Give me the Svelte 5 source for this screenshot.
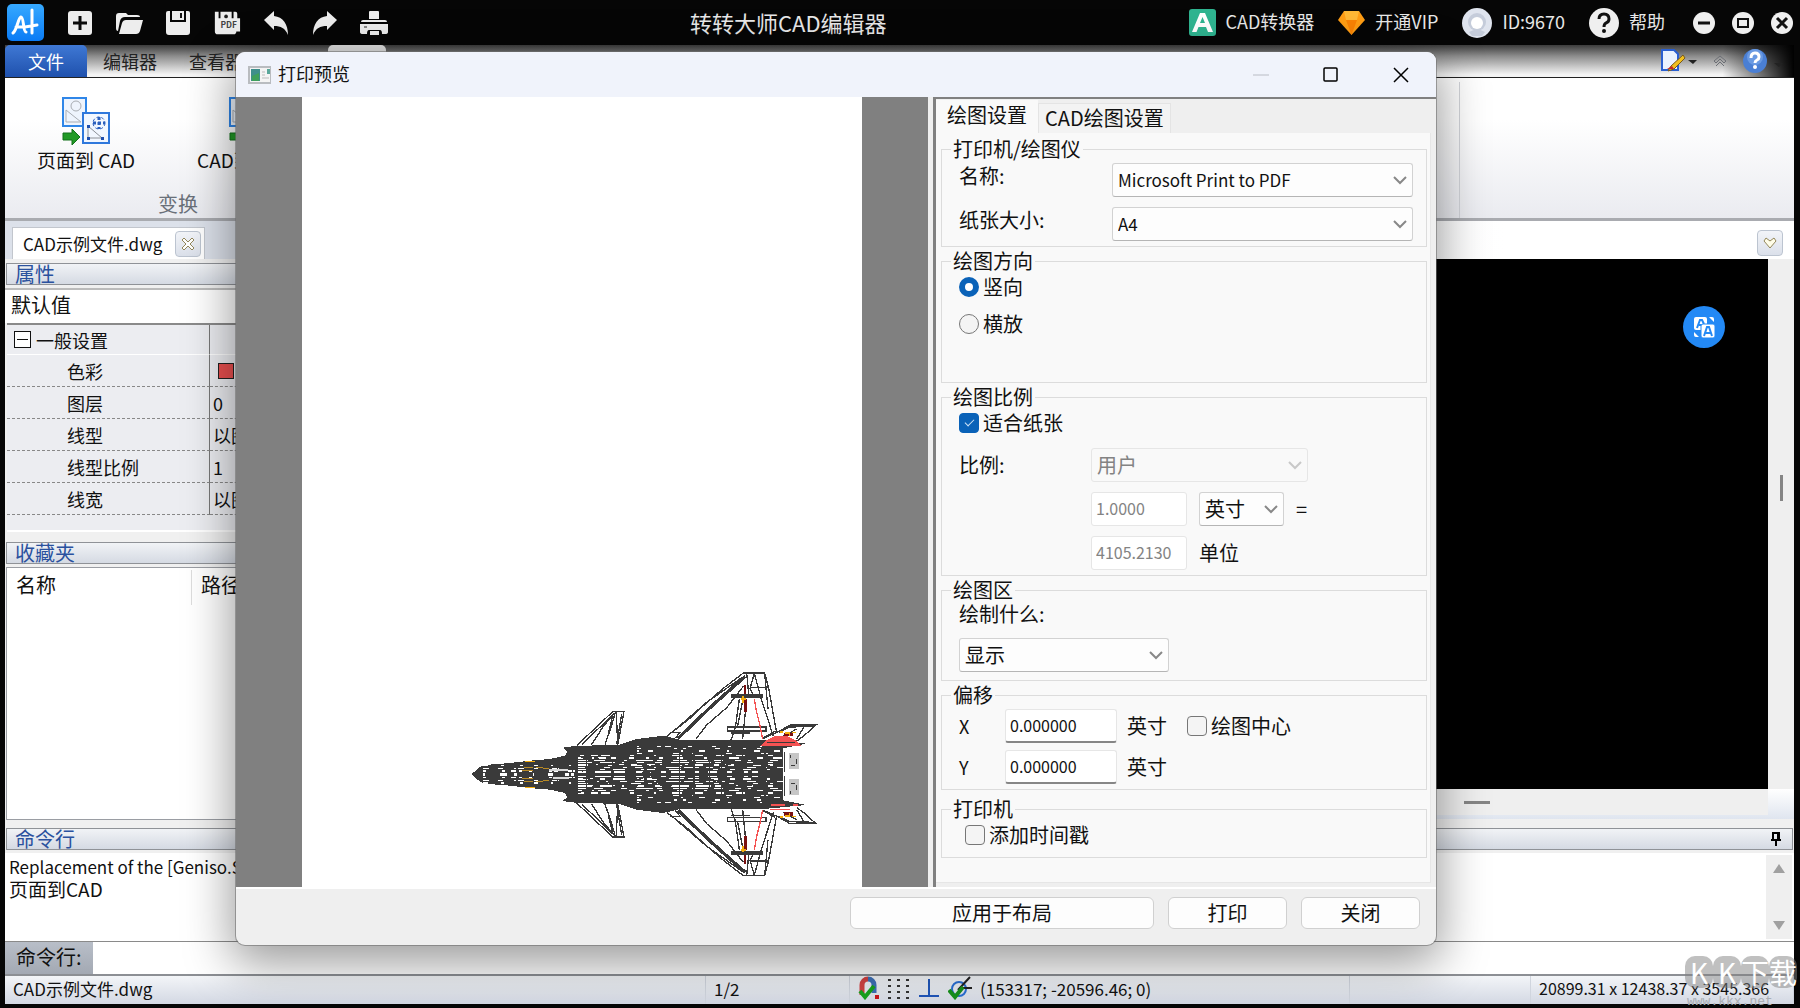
<script lang="ts">
	const props = [
		{ name: '色彩', value: '', swatch: true },
		{ name: '图层', value: '0' },
		{ name: '线型', value: '以图层' },
		{ name: '线型比例', value: '1' },
		{ name: '线宽', value: '以图层' }
	];

	let orientation = $state('portrait');
	let fitPaper = $state(true);
	let center = $state(false);
	let timestamp = $state(false);
	let ratioTop = $state('1.0000');
	let ratioBottom = $state('4105.2130');
	let offsetX = $state('0.000000');
	let offsetY = $state('0.000000');

	// panel gaps between the dense mesh lines of the fuselage
	function meshGaps() {
		let seed = 11;
		const rnd = () => {
			seed = (seed * 16807) % 2147483647;
			return seed / 2147483647;
		};
		let d = '';
		for (let y = 292; y < 376; y += 7) {
			let x = y < 315 ? 560 : 385;
			while (x < 985) {
				const open = y > 330 && x < 740 ? 1.9 : y > 315 ? 0.9 : 0.5;
				const len = Math.round(6 + rnd() * 26 * open);
				if (x + len < 1000) d += `M${x} ${y}h${len}`;
				x += len + Math.round(8 + (rnd() * 54) / open);
			}
		}
		for (let y = 350; y < 376; y += 8) {
			for (let x = 100; x < 375; x += 10 + Math.round(rnd() * 50)) d += `M${x} ${y}h${4 + Math.round(rnd() * 12)}`;
		}
		return d;
	}
	const gaps = meshGaps();
</script>

{#snippet chevron()}
	<svg class="chevron" viewBox="0 0 14 14" aria-hidden="true"><path d="M1 4l6 6 6-6" /></svg>
{/snippet}

{#snippet pages()}
	<svg width="48" height="48" viewBox="0 0 48 48" aria-hidden="true">
		<rect x="1" y="1" width="23" height="28" fill="#eef4fd" stroke="#2f86e8" stroke-width="2" />
		<circle cx="14" cy="9" r="5" fill="none" stroke="#a9adb3" />
		<path d="M4 13v12h15z" fill="none" stroke="#a9adb3" />
		<path d="M1 36h9v-4l8 8-8 8v-5H1z" fill="#219a26" stroke="#12711a" />
		<rect x="21" y="16" width="26" height="30" fill="#f2f7ff" stroke="#2f78dc" stroke-width="2" />
		<path d="M26 29v12h14z" fill="none" stroke="#8c9097" />
		<circle cx="37" cy="26" r="6" fill="none" stroke="#2a5fbd" stroke-dasharray="3 2" />
		<path d="M31 26h12M37 20v12" stroke="#2a5fbd" stroke-width="3" stroke-dasharray="3 2" />
		<path d="M25 28h3v3h-3zM25 40h3v3h-3zM39 40h3v3h-3z" fill="#1f4fae" />
	</svg>
{/snippet}

{#snippet halfJet()}
	<path fill="#3a3a3a" stroke="none" d="M64 376 90 354 104 348 180 342 250 334 300 330 345 320 352 308 338 296 375 291 510 287 560 270 640 260 690 272 940 272 1070 284 1000 298V376z" />
	<path d="M380 290 488 188H522L503 288M396 286 492 194M424 288 460 232 494 192M465 286 484 232 496 190M499 190 503 288M488 200 476 250M515 195 500 286" />
	<path d="M650 262 715 212 760 170 820 118 880 72H944L956 118 980 252M664 252 770 160 878 84M738 270 770 228 830 176 880 112M890 72 896 134M913 74 900 118 908 134M913 74 934 150 970 262M944 74 954 180M900 116H955M890 150 878 270M868 150 856 236 842 276M880 146 862 236M938 268 976 246M660 250H690L676 268" />
	<path stroke-width="10" d="M684 268 780 176 838 124 886 82" />
	<path stroke-width="13" d="M844 141H938" />
	<path d="M832 234H948V246H832zM842 252H900" />
	<path d="M940 268 985 248 1020 228H1098L1060 262 1040 276M988 250 1020 234 1094 232M1062 234 1040 270M1000 262 1040 240" />
	<path stroke="#f45252" d="M913 150 920 190 930 230 938 270" />
	<path stroke="#7a1010" stroke-width="8" d="M885 108V134M886 150V190" />
	<path stroke="#f6ae0c" stroke-width="6" d="M880 142V162M874 150H888" />
	<path stroke="#7a1010" stroke-width="10" d="M1002 257H1028" />
	<path stroke="#f6ae0c" stroke-width="5" d="M990 248h10M1006 252h12v8M1026 250h12" />
	<rect x="1016" y="313" width="31" height="48" fill="#c6c6c6" stroke="none" />
	<path stroke-width="3" d="M1022 318v8M1038 330v14M1024 350h12" />
	<path stroke="#fff" stroke-width="4" d={gaps} />
	<path stroke="#3a3a3a" stroke-width="4" d="M534 288V376M688 272V376M732 296V376M778 300V376M815 290V376M878 276V376M945 300V376M1004 310V370M376 292V376M410 320V376" />
	<path d="M385 320 440 344 530 350 600 372M440 330 520 336 600 352 690 346M395 366 470 352 560 362 640 342 720 350M560 376 640 358 780 362 860 340 960 350M435 338h12v12h-12zM487 338h12v10h-12z" />
	<path stroke="#fff" stroke-width="5" stroke-dasharray="8 6" d="M1010 306V370" />
	<path stroke="#f6ae0c" stroke-width="5" d="M226 337h28" />
	<path stroke="#b98a25" stroke-width="3" d="M222 354h26M258 354h20M216 364h34M280 358h18" />
{/snippet}

<div class="app">
	<header class="titlebar">
		<svg class="logo" width="37" height="37" viewBox="0 0 37 37" aria-hidden="true">
			<defs>
				<linearGradient id="lg" x1="0" y1="0" x2="0" y2="1">
					<stop offset="0" stop-color="#36a9ff" /><stop offset="1" stop-color="#0a7bf5" />
				</linearGradient>
			</defs>
			<rect width="37" height="37" rx="5" fill="url(#lg)" />
			<path d="M6 29C10 26 11 14 14 13c3 0 2 15 5 15M9 23h9l12-2M25 6v23" fill="none" stroke="#fff" stroke-width="3" stroke-linecap="round" />
		</svg>
		<nav class="tools">
			<button aria-label="新建">
				<svg viewBox="0 0 28 28"><rect x="2" y="2" width="24" height="24" rx="3" fill="#ededed" /><path d="M14 7v14M7 14h14" stroke="#0a0a0a" stroke-width="3" /></svg>
			</button>
			<button aria-label="打开">
				<svg viewBox="0 0 28 28"><path d="M1 7q0-3 3-3h7l2 2h9q3 0 3 2H10q-4 0-5 4L3 22q-2 0-2-3z" fill="#ededed" /><path d="M11 11h17l-3 11q-1 3-4 3H4l3-11q1-3 4-3z" fill="#ededed" /></svg>
			</button>
			<button aria-label="保存">
				<svg viewBox="0 0 28 28"><path d="M2 4q0-2 2-2h2v11h16V2h2q2 0 2 2v19q0 3-3 3H5q-3 0-3-3z" fill="#ededed" /><path d="M8 2h12v9H8z" fill="#ededed" /><path d="M17 4v5" stroke="#111" stroke-width="2" /></svg>
			</button>
			<button aria-label="输出 PDF">
				<svg viewBox="0 0 30 28"><path d="M2 2h4v7h2V2h12v7h2V2h2q2 0 2 2v5h3v14h-4q0 3-3 3H5q-3 0-3-3z" fill="#ededed" /><circle cx="14" cy="7" r="2" fill="#222" /><text x="8" y="19" font-size="9" font-weight="700" fill="#444">PDF</text></svg>
			</button>
			<button aria-label="撤销">
				<svg viewBox="0 0 28 28"><path d="M2 11 12 2v5c9 1 14 8 14 19-3-7-7-9-14-9v4z" fill="#ededed" /></svg>
			</button>
			<button aria-label="重做">
				<svg viewBox="0 0 28 28"><path d="M26 11 16 2v5C7 8 2 15 2 26c3-7 7-9 14-9v4z" fill="#ededed" /></svg>
			</button>
			<button aria-label="打印">
				<svg viewBox="0 0 28 28"><path d="M9 3q0-1 1-1h8q1 0 1 1v7H9zM1 13q0-2 2-2h22q2 0 2 2H1zM0 15h28v8q0 2-3 2h-3q0-4-2-4H9q-2 0-2 4H3q-3 0-3-2zM10 22h9v4h-9z" fill="#ededed" /><path d="M4 18h3" stroke="#222" /></svg>
			</button>
		</nav>
		<h1>转转大师CAD编辑器</h1>
		<nav class="account">
			<a href="#convert">
				<svg width="27" height="27" viewBox="0 0 27 27" aria-hidden="true"><rect width="27" height="27" rx="3" fill="#2fb490" /><path d="M3 23 11 4h5l8 19h-5l-2-5H9.500l-2 5zM11 14h5l-2.500-6z" fill="#fff" /></svg>
				CAD转换器
			</a>
			<a href="#vip">
				<svg width="27" height="26" viewBox="0 0 27 26" aria-hidden="true"><path d="M6 1h15l6 9-13.500 15L0 10z" fill="#ff9d14" /><path d="M6 1h15l-2 9H8z" fill="#ffb836" /><path d="M8 10h11l-5.500 15z" fill="#f98204" /></svg>
				开通VIP
			</a>
			<a href="#user">
				<svg width="30" height="30" viewBox="0 0 30 30" aria-hidden="true"><circle cx="15" cy="15" r="15" fill="#dfe4ee" /><circle cx="15" cy="14" r="9" fill="#c5ccda" /><circle cx="15" cy="15" r="6" fill="#fff" /><path d="M7 24q8-5 16 0l-3 4H10z" fill="#c5ccda" /></svg>
				ID:9670
			</a>
			<a href="#help">
				<svg width="30" height="30" viewBox="0 0 30 30" aria-hidden="true"><circle cx="15" cy="15" r="15" fill="#efefef" /><path d="M10 11q0-5 5-5t5 5q0 3-3 4-2 1-2 4" fill="none" stroke="#111" stroke-width="3" /><circle cx="15" cy="23" r="2" fill="#111" /></svg>
				帮助
			</a>
		</nav>
		<div class="wincontrols">
			<button aria-label="最小化"><svg viewBox="0 0 22 22"><circle cx="11" cy="11" r="11" fill="#efefef" /><path d="M5 11h12" stroke="#111" stroke-width="3" /></svg></button>
			<button aria-label="最大化"><svg viewBox="0 0 22 22"><circle cx="11" cy="11" r="11" fill="#efefef" /><path d="M6 7h10v8H6z" fill="none" stroke="#111" stroke-width="2" /></svg></button>
			<button aria-label="退出"><svg viewBox="0 0 22 22"><circle cx="11" cy="11" r="11" fill="#efefef" /><path d="M6 6l10 10M16 6 6 16" stroke="#111" stroke-width="3" /></svg></button>
		</div>
	</header>

	<div class="shell">
		<nav class="tabs">
			<button class="tab file">文件</button>
			<button class="tab">编辑器</button>
			<button class="tab">查看器</button>
			<button class="tab current">输出</button>
			<div class="tabtools">
				<svg width="36" height="24" viewBox="0 0 36 24" aria-hidden="true">
					<path d="M1 1h12l4 4v16H1z" fill="#eaf2ff" stroke="#2a5fd0" stroke-width="2" />
					<path d="M22 6 10 17l-3 5 6-2L24 9z" fill="#f2c01e" stroke="#7a5a18" />
					<path d="M6 20l5-3 2 3z" fill="#c3262b" />
					<path d="M27 11h9l-4 4z" fill="#222" />
				</svg>
				<svg width="14" height="12" viewBox="0 0 14 12" aria-hidden="true"><path d="M1 6l6-5 6 5-2 2-4-4-4 4zM3 11l4-4 4 4" fill="none" stroke="#6c6f75" stroke-width="1" /></svg>
				<svg width="40" height="26" viewBox="0 0 40 26" aria-hidden="true">
					<circle cx="12" cy="13" r="12" fill="#4a7fd4" /><circle cx="12" cy="9" r="8" fill="#6a9ae2" />
					<path d="M8 10q0-5 4-5t4 4q0 2-2 3t-2 3" fill="none" stroke="#fff" stroke-width="3" /><circle cx="12" cy="19" r="2" fill="#fff" />
					<path d="M31 15h9l-4 4z" fill="#222" />
				</svg>
			</div>
		</nav>

		<section class="ribbon">
			<div class="group">
				<div class="commands">
					<button>{@render pages()}页面到 CAD</button>
					<button>{@render pages()}CAD到新页面</button>
				</div>
				<p>变换</p>
			</div>
			<div class="divider"></div>
		</section>

		<div class="docbar">
			<div class="doc">
				<span>CAD示例文件.dwg</span>
				<button class="mini" aria-label="关闭文件">
					<svg width="16" height="16" viewBox="0 0 16 16"><path d="M2 4l2-2 4 4 4-4 2 2-4 4 4 4-2 2-4-4-4 4-2-2 4-4z" fill="#fff" stroke="#93875a" /></svg>
				</button>
			</div>
			<button class="mini" aria-label="收藏">
				<svg width="16" height="16" viewBox="0 0 16 16"><path d="M2 6l2-3 4 3 4-3 2 3-6 7z" fill="#fffde8" stroke="#93875a" stroke-width="1" /></svg>
			</button>
		</div>

		<main class="work">
			<aside>
				<h2 class="dock">属性</h2>
				<div class="preset">默认值</div>
				<table class="props">
					<tbody>
						<tr class="head"><th><i></i>一般设置</th><td></td></tr>
						{#each props as p}
							<tr>
								<th>{p.name}</th>
								<td>{#if p.swatch}<b class="swatch"></b>{/if}{p.value}</td>
							</tr>
						{/each}
					</tbody>
				</table>
				<h2 class="dock">收藏夹</h2>
				<div class="favs">
					<span>名称</span>
					<span>路径</span>
				</div>
			</aside>
			<div class="viewport">
				<div class="canvas">
					<button class="translate" aria-label="翻译">
						<svg width="22" height="22" viewBox="0 0 22 22">
							<rect x="1" y="1" width="13" height="13" rx="2" fill="#fff" /><path d="M4 12 7 4h2l2 4M6 9h4" fill="none" stroke="#2389f5" stroke-width="2" />
							<rect x="8" y="8" width="14" height="14" rx="2" fill="#fff" stroke="#2389f5" /><path d="M11 20l3-9h2l3 9M12 17h6" fill="none" stroke="#2389f5" stroke-width="2" />
							<path d="M16 1h3q2 0 2 2v3zM1 16v3q0 2 2 2h3z" fill="#fff" />
						</svg>
					</button>
				</div>
				<div class="vbar"><i></i></div>
				<div class="hbar"><i></i></div>
			</div>
		</main>

		<section class="console">
			<h2 class="dock">
				命令行
				<svg width="12" height="14" viewBox="0 0 12 14" aria-hidden="true"><path d="M3 8V1h6v7M1 8h10M6 8v6M8 1v7" fill="none" stroke="#000" stroke-width="2" /></svg>
			</h2>
			<div class="log">
				<div>
					<p class="note">Replacement of the [Geniso.SHX]</p>
					<p>页面到CAD</p>
				</div>
				<div class="arrows">
					<svg width="12" height="9" viewBox="0 0 12 9" aria-hidden="true"><path d="M6 0l6 9H0z" /></svg>
					<svg width="12" height="9" viewBox="0 0 12 9" aria-hidden="true"><path d="M6 9 0 0h12z" /></svg>
				</div>
			</div>
			<div class="prompt">
				<label for="cmd">命令行:</label>
				<input id="cmd" type="text" />
			</div>
		</section>

		<footer class="status">
			<span>CAD示例文件.dwg</span>
			<span>1/2</span>
			<span class="snaps">
				<svg width="22" height="24" viewBox="0 0 22 24" aria-hidden="true">
					<path d="M4 19V9a6 6 0 0 1 6-6" fill="none" stroke="#cf4141" stroke-width="5" /><path d="M10 3a6 6 0 0 1 6 6v8" fill="none" stroke="#3d6fb5" stroke-width="5" />
					<path d="M2 15l5 6 9-11" fill="none" stroke="#17a31d" stroke-width="4" /><path d="M17 19h4v4h-4z" fill="#c9151b" />
				</svg>
				<svg width="22" height="24" viewBox="0 0 22 24" aria-hidden="true"><path d="M0 4h22M0 10h22M0 16h22M0 22h22" stroke="#333" stroke-width="2" stroke-dasharray="3 6" /></svg>
				<svg width="22" height="24" viewBox="0 0 22 24" aria-hidden="true"><path d="M11 3v16M1 20h20" stroke="#1f55b8" stroke-width="2" /></svg>
				<svg width="24" height="24" viewBox="0 0 24 24" aria-hidden="true">
					<circle cx="11" cy="13" r="7" fill="none" stroke="#2a6fd2" stroke-width="2" /><path d="M10 14 22 1M12 12h12" stroke="#222" stroke-width="2" /><path d="M1 14l6 7 8-10" fill="none" stroke="#17911d" stroke-width="4" />
				</svg>
			</span>
			<span>(153317; -20596.46; 0)</span>
			<span></span>
			<span class="extent">20899.31 x 12438.37 x 3545.366</span>
		</footer>
	</div>

	<section class="dialog" role="dialog" aria-labelledby="dlg-title">
		<header>
			<svg width="24" height="18" viewBox="0 0 24 18" aria-hidden="true">
				<path d="M0 0h23v18H0z" fill="#b9bcc0" /><path d="M2 2h20v14H2z" fill="#f4f4f4" /><path d="M3 3h9v12H3z" fill="#3f8f8c" /><path d="M4 10l7-3v8H4z" fill="#3fa05b" /><path d="M14 6h3M14 9h3M14 12h7" stroke="#bbb" /><path d="M19 3h3v5h-3z" fill="#5aa79a" />
			</svg>
			<h2 id="dlg-title">打印预览</h2>
			<button aria-label="最小化" disabled><svg viewBox="0 0 16 16"><path d="M0 8h16" stroke="#b9bcc4" stroke-width="1" /></svg></button>
			<button aria-label="最大化"><svg viewBox="0 0 16 16"><rect x="1" y="1" width="13" height="13" rx="1" fill="none" stroke="#000" stroke-width="1.500" /></svg></button>
			<button aria-label="关闭窗口"><svg viewBox="0 0 16 16"><path d="M1 1l14 14M15 1 1 15" stroke="#000" stroke-width="1.500" /></svg></button>
		</header>

		<div class="body">
			<div class="preview">
				<div class="paper">
					<svg width="350" height="210" viewBox="60 60 1050 630" fill="none" stroke="#3a3a3a" stroke-width="4" shape-rendering="crispEdges" role="img" aria-label="图纸">
						{@render halfJet()}
						<g transform="translate(0 752) scale(1 -1)">{@render halfJet()}</g>
						<path fill="#f45252" stroke="none" d="M932 290 950 274 972 262H1012L1034 272 1052 290z" />
						<path stroke="#3a3a3a" d="M950 281H1036" />
						<path stroke="#f45252" d="M964 468h40M960 482h60M1030 468h14" />
						<path stroke="#d8d8d8" stroke-width="6" d="M298 362h56M310 388h48" />
					</svg>
				</div>
			</div>

			<form class="settings" onsubmit={(e) => e.preventDefault()}>
				<div class="dlgtabs">
					<button type="button" class="on">绘图设置</button>
					<button type="button">CAD绘图设置</button>
				</div>
				<div class="page">
					<fieldset class="printer">
						<legend>打印机/绘图仪</legend>
						<label for="printer">名称:</label>
						<span class="pick"><select id="printer"><option>Microsoft Print to PDF</option></select>{@render chevron()}</span>
						<label for="size">纸张大小:</label>
						<span class="pick"><select id="size"><option>A4</option></select>{@render chevron()}</span>
					</fieldset>

					<fieldset class="orient">
						<legend>绘图方向</legend>
						<label class="check"><input type="radio" name="orient" value="portrait" bind:group={orientation} />竖向</label>
						<label class="check"><input type="radio" name="orient" value="landscape" bind:group={orientation} />横放</label>
					</fieldset>

					<fieldset class="scale">
						<legend>绘图比例</legend>
						<label class="check"><input type="checkbox" bind:checked={fitPaper} />适合纸张</label>
						<div class="ratio">
							<label for="ratio">比例:</label>
							<span class="pick user"><select id="ratio" disabled={fitPaper}><option>用户</option></select>{@render chevron()}</span>
							<div class="line">
								<input type="text" aria-label="图纸长度" disabled={fitPaper} bind:value={ratioTop} />
								<span class="pick unit"><select aria-label="长度单位"><option>英寸</option></select>{@render chevron()}</span>
								<span>=</span>
							</div>
							<div class="line">
								<input id="units" type="text" disabled={fitPaper} bind:value={ratioBottom} />
								<label for="units">单位</label>
							</div>
						</div>
					</fieldset>

					<fieldset class="area">
						<legend>绘图区</legend>
						<label for="what">绘制什么:</label>
						<span class="pick"><select id="what"><option>显示</option></select>{@render chevron()}</span>
					</fieldset>

					<fieldset class="offset">
						<legend>偏移</legend>
						<div class="line">
							<label for="ox">X</label>
							<input id="ox" type="text" bind:value={offsetX} />
							<span>英寸</span>
							<label class="check"><input type="checkbox" bind:checked={center} />绘图中心</label>
						</div>
						<div class="line">
							<label for="oy">Y</label>
							<input id="oy" type="text" bind:value={offsetY} />
							<span>英寸</span>
						</div>
					</fieldset>

					<fieldset class="stamp">
						<legend>打印机</legend>
						<label class="check"><input type="checkbox" bind:checked={timestamp} />添加时间戳</label>
					</fieldset>
				</div>
			</form>
		</div>

		<footer>
			<button class="wide">应用于布局</button>
			<button>打印</button>
			<button>关闭</button>
		</footer>
	</section>

	<div class="watermark">
		<p><b>K</b><b>K</b><b>下</b><b>载</b></p>
		<small>www.kkx.net</small>
	</div>
</div>

<style>
	:global(body) {
		margin: 0;
		background: #060606;
		color: #111;
		font-family: "Noto Sans CJK SC", "Open Sans", sans-serif;
		font-size: 20px;
		line-height: 24px;
	}
	h1,
	h2,
	p {
		margin: 0;
		font-weight: 400;
	}
	button,
	input,
	select {
		box-sizing: border-box;
		margin: 0;
		padding: 0;
		border: 0;
		background: none;
		color: inherit;
		font: inherit;
	}
	svg {
		display: block;
		flex: none;
	}
	.app {
		position: relative;
		display: flex;
		flex-direction: column;
		box-sizing: border-box;
		min-height: 100vh;
		padding: 0 6px 4px 5px;
		overflow: hidden;
	}

	/* title bar */
	.titlebar {
		display: flex;
		align-items: center;
		height: 45px;
		color: #e8e8e8;
		font-size: 18px;
	}
	.logo {
		margin: 0 22px 0 2px;
	}
	.tools {
		display: flex;
		gap: 21px;
	}
	.tools button,
	.tools svg {
		width: 28px;
		height: 28px;
	}
	h1 {
		flex: 1;
		padding-bottom: 2px;
		font-size: 22px;
		text-align: center;
	}
	.account {
		display: flex;
		gap: 24px;
		padding-bottom: 3px;
	}
	.account a {
		display: flex;
		align-items: center;
		gap: 10px;
		color: inherit;
		text-decoration: none;
	}
	.account svg {
		margin-top: 3px;
	}
	.wincontrols {
		display: flex;
		gap: 17px;
		margin: 0 1px 0 28px;
	}
	.wincontrols svg {
		width: 22px;
		height: 22px;
	}

	.shell {
		display: flex;
		flex: 1;
		flex-direction: column;
		background: #f0f0f0;
	}
	.tabs {
		display: flex;
		height: 32px;
		border-bottom: 1px solid #222;
		background: linear-gradient(90deg, transparent 96%, #000), linear-gradient(#3c3c3c, #8d8d8d 35%, #f4f4f4 92%);
	}
	.tab {
		padding: 0 16px;
		color: #222;
		font-size: 18px;
		line-height: 32px;
	}
	.tab.file {
		width: 82px;
		border-radius: 5px 5px 0 0;
		background: linear-gradient(#3f78d4, #1f51ad);
		color: #fff;
	}
	.tab.current {
		margin-left: 69px;
		padding: 0 11px;
		border-radius: 5px 5px 0 0;
		background: #ddd;
	}
	.tabtools {
		display: flex;
		align-items: center;
		gap: 16px;
		margin: 0 11px 0 auto;
	}
	.ribbon {
		display: flex;
		height: 140px;
		border-bottom: 3px solid #a9abb0;
		background: linear-gradient(#fff 30%, #eaebf0);
	}
	.group {
		display: flex;
		flex: 0 0 346px;
		flex-direction: column;
		justify-content: space-between;
		padding: 19px 0 2px;
	}
	.commands {
		display: flex;
		gap: 62px;
		padding-left: 32px;
		font-size: 19px;
	}
	.commands button {
		display: grid;
		justify-items: center;
		gap: 3px;
		white-space: nowrap;
	}
	.group p {
		color: #6a7079;
		text-align: center;
	}
	.divider {
		margin: 4px 334px 0 auto;
		border-left: 1px solid #d3d5da;
	}
	.docbar {
		display: flex;
		justify-content: space-between;
		align-items: flex-end;
		height: 38px;
		padding: 0 11px 0 7px;
		background: linear-gradient(90deg, #dce1ea 300px, #fff 1500px);
	}
	.doc {
		display: flex;
		align-items: center;
		gap: 13px;
		height: 31px;
		padding: 0 3px 0 10px;
		border: 1px solid #c2c6cd;
		border-bottom: 0;
		background: #fff;
		font-size: 17px;
	}
	.mini {
		display: grid;
		place-items: center;
		width: 26px;
		height: 26px;
		border: 1px solid #bcc4d0;
		border-radius: 4px;
		background: linear-gradient(#f2f4f8, #dbe0ea);
	}
	.docbar > .mini {
		margin-bottom: 3px;
	}

	/* docked panels */
	.work {
		display: flex;
		flex: 1;
	}
	aside {
		display: flex;
		flex: 0 0 300px;
		flex-direction: column;
		padding-top: 4px;
	}
	.dock {
		display: flex;
		justify-content: space-between;
		align-items: center;
		height: 20px;
		margin: 0 1px;
		padding: 0 10px 0 8px;
		border: 1px solid #8f9297;
		background: linear-gradient(#f1f3f6, #d5dae3);
		color: #2a519e;
		font-size: 20px;
		line-height: 18px;
	}
	.preset {
		margin-top: 3px;
		padding: 3px 6px 6px;
		border-top: 2px solid #bbb;
		background: #fff;
	}
	.props {
		width: 100%;
		margin: 0 1px 10px 2px;
		padding-bottom: 15px;
		border-top: 2px solid #8a8a8a;
		border-bottom: 2px solid #fff;
		border-spacing: 0;
		background: #ecedf1;
		font-size: 18px;
		line-height: 24px;
		text-align: left;
	}
	.props th {
		width: 142px;
		height: 31px;
		padding: 0 0 0 60px;
		border-right: 1px solid #777;
		border-bottom: 1px dashed #888;
		font-weight: 400;
	}
	.props td {
		padding: 0 0 0 3px;
		border-bottom: 1px dashed #888;
	}
	.props .head th {
		display: flex;
		align-items: center;
		gap: 5px;
		width: auto;
		height: 29px;
		padding: 0 0 0 7px;
	}
	.props .head :is(th, td) {
		border-bottom: 1px solid #fff;
	}
	.head i {
		width: 15px;
		height: 15px;
		border: 1px solid #111;
		background: linear-gradient(#111, #111) center / 11px 1px no-repeat #fff;
	}
	.swatch {
		display: block;
		width: 14px;
		height: 14px;
		margin-left: 5px;
		border: 1px solid #222;
		background: #ea4f4f;
	}
	.favs {
		display: grid;
		flex: 1;
		grid-template-columns: 184px 1fr;
		align-items: start;
		margin: 3px 0 8px 1px;
		border: 1px solid #9a9da3;
		background: #fff;
	}
	.favs span {
		margin-top: 2px;
		padding: 4px 9px 9px;
		line-height: 22px;
	}
	.favs span + span {
		border-left: 1px solid #ddd;
	}
	.viewport {
		display: grid;
		flex: 1;
		grid-template: 1fr 26px / 1fr 26px;
		margin-bottom: 9px;
		padding-bottom: 4px;
		background: linear-gradient(#fff, #dfe5ef) bottom / 100% 30px no-repeat;
	}
	.canvas {
		position: relative;
		background: #000;
	}
	.translate {
		position: absolute;
		top: 47px;
		right: 43px;
		display: grid;
		place-items: center;
		width: 42px;
		height: 42px;
		border-radius: 50%;
		background: #2389f5;
	}
	.vbar,
	.hbar {
		background: #efefef;
	}
	.vbar i,
	.hbar i {
		display: block;
		width: 3px;
		height: 26px;
		margin: 216px 0 0 12px;
		background: #858585;
	}
	.hbar i {
		width: 26px;
		height: 3px;
		margin: 12px 278px 0 auto;
	}

	.log {
		display: flex;
		height: 88px;
		margin-top: 3px;
		border-bottom: 1px solid #8a8a8a;
		background: #fff;
		font-size: 19px;
		line-height: 22px;
	}
	.log > div:first-child {
		flex: 1;
		padding: 3px 4px;
	}
	.log .note {
		font-size: 17px;
	}
	.arrows {
		display: flex;
		flex-direction: column;
		justify-content: space-between;
		margin: 2px 2px 2px 0;
		padding: 9px 7px;
		background: #efefef;
		fill: #a0a0a0;
	}
	.prompt {
		display: flex;
		height: 32px;
		border-bottom: 2px solid #8c8f94;
		background: #fff;
	}
	.prompt label {
		padding: 0 11px;
		background: linear-gradient(#b8bec8, #a3a9b3);
		line-height: 30px;
	}
	.prompt input {
		flex: 1;
	}
	.status {
		display: grid;
		grid-template-columns: 701px 144px 122px 1fr 181px 263px;
		height: 28px;
		background: linear-gradient(#f3f5f8, #d3d8e3);
		font-size: 17px;
		line-height: 25px;
	}
	.status span {
		padding-left: 8px;
		border-right: 1px solid #d0d5de;
	}
	.status .snaps {
		display: flex;
		gap: 8px;
		border: 0;
	}
	.status .extent {
		font-size: 16px;
	}

	/* print preview window */
	.dialog {
		position: absolute;
		top: 52px;
		right: 364px;
		left: 236px;
		display: flex;
		flex-direction: column;
		border-radius: 9px;
		background: #efefef;
		box-shadow: 0 0 0 1px rgba(110, 110, 110, .6), 0 14px 48px 4px rgba(0, 0, 0, .4);
		overflow: hidden;
	}
	.dialog > header {
		display: flex;
		align-items: center;
		height: 45px;
		padding-left: 12px;
		background: #f0f3fb;
	}
	.dialog h2 {
		flex: 1;
		margin-left: 6px;
		padding-bottom: 4px;
		font-size: 18px;
	}
	.dialog > header button {
		display: grid;
		place-items: center;
		width: 70px;
		height: 45px;
	}
	.dialog > header button svg {
		width: 16px;
		height: 16px;
	}
	.body {
		display: flex;
		border-bottom: 2px solid #fff;
	}
	.preview {
		flex: 1;
		margin-right: 5px;
		padding: 0 66px;
		background: #808080;
	}
	.paper {
		display: flex;
		align-items: flex-end;
		justify-content: flex-end;
		box-sizing: border-box;
		height: 100%;
		padding: 0 42px 8px 0;
		background: #fff;
	}
	.settings {
		flex: 0 0 495px;
		padding: 1px 5px 4px 0;
		border-top: 2px solid #808080;
		border-left: 3px solid #808080;
	}
	.dlgtabs {
		display: flex;
		align-items: flex-end;
	}
	.dlgtabs button {
		height: 30px;
		padding: 0 6px 2px;
		border: 1px solid #e4e4e4;
		border-bottom: 0;
		background: #f3f3f3;
		line-height: 26px;
	}
	.dlgtabs .on {
		height: 33px;
		padding: 0 10px 4px;
		border-color: #f9f9f9;
		background: #f9f9f9;
	}
	.page {
		display: grid;
		gap: 4px;
		padding: 6px 3px 24px 5px;
		border: 1px solid #e6e6e6;
		border-top: 0;
		border-left: 0;
		background: #f9f9f9;
	}
	fieldset {
		min-width: 0;
		margin: 0;
		padding: 4px 13px 5px 17px;
		border: 1px solid #dcdcdc;
	}
	legend {
		margin-left: -8px;
		padding: 0 2px;
		line-height: 20px;
	}
	.pick {
		display: grid;
		align-items: center;
	}
	.pick > :global(*) {
		grid-area: 1 / 1;
	}
	.chevron {
		width: 14px;
		height: 14px;
		margin-right: 6px;
		justify-self: end;
		fill: none;
		stroke: #888;
		stroke-width: 2;
		pointer-events: none;
	}
	select {
		width: 100%;
		height: 34px;
		padding: 0 24px 0 5px;
		border: 1px solid #d2d2d2;
		border-bottom-color: #b5b5b5;
		border-radius: 3px;
		appearance: none;
		background: #fdfdfd;
		line-height: 24px;
	}
	.printer select {
		font-size: 17px;
	}
	.settings input[type="text"] {
		height: 34px;
		padding: 0 4px 2px;
		border: 1px solid #e6e6e6;
		border-bottom: 2px solid #868686;
		border-radius: 3px;
		background: #fff;
		font-size: 16px;
	}
	.settings :is(select, input[type="text"]):disabled {
		border: 1px solid #e6e6e6;
		color: #838383;
		opacity: 1;
	}
	select:disabled {
		background: #f9f9f9;
	}
	select:disabled + .chevron {
		stroke: #c8c8c8;
	}
	.check {
		display: flex;
		align-items: center;
		gap: 4px;
	}
	.check input {
		width: 20px;
		height: 20px;
		border: 1px solid #777;
		border-radius: 4px;
		appearance: none;
		background: #f4f4f4;
	}
	.check input[type="radio"] {
		border-radius: 50%;
	}
	.check input[type="radio"]:checked {
		border: 6px solid #0a62b8;
		background: #fff;
	}
	.check input[type="checkbox"]:checked {
		display: grid;
		place-items: center;
		border-color: #0a62b8;
		background: #0a62b8;
	}
	.check input[type="checkbox"]:checked::before {
		width: 8px;
		height: 4px;
		margin-bottom: 3px;
		border: solid #cfe3f6;
		border-width: 0 0 1px 1px;
		content: "";
		transform: rotate(-45deg);
	}
	.printer {
		display: grid;
		grid-template-columns: 153px 1fr;
		gap: 10px 0;
	}
	.printer > label {
		line-height: 26px;
	}
	.orient .check + .check {
		margin-top: 13px;
	}
	.orient {
		padding-bottom: 46px;
	}
	.ratio {
		display: grid;
		grid-template-columns: 132px 1fr;
		gap: 10px 0;
		align-items: center;
		margin-top: 13px;
	}
	.line {
		display: flex;
		align-items: center;
	}
	.ratio .line {
		grid-column: 2;
		gap: 12px;
	}
	.ratio input {
		width: 96px;
	}
	.user {
		width: 217px;
	}
	.unit {
		width: 85px;
	}
	.area {
		padding-top: 2px;
		padding-bottom: 8px;
	}
	.area .pick {
		width: 210px;
		margin-top: 12px;
	}
	.area > label {
		display: block;
	}
	.offset .line + .line {
		margin-top: 7px;
	}
	.offset .line > label:first-child {
		width: 46px;
		font-size: 18px;
	}
	.offset .line > input {
		width: 112px;
		margin-right: 10px;
	}
	.offset .check {
		margin-left: 20px;
	}
	.stamp {
		margin-top: 5px;
		padding-bottom: 10px;
		padding-left: 23px;
	}
	.stamp legend {
		margin-left: -14px;
	}
	.dialog > footer {
		display: flex;
		justify-content: flex-end;
		gap: 14px;
		padding: 8px 16px 16px;
	}
	.dialog > footer button {
		width: 119px;
		height: 32px;
		border: 1px solid #d0d0d0;
		border-radius: 6px;
		background: #fdfdfd;
		line-height: 28px;
	}
	.dialog > footer .wide {
		width: 304px;
	}

	.watermark {
		position: absolute;
		right: 3px;
		bottom: -8px;
		width: 112px;
		color: #fff;
		pointer-events: none;
	}
	.watermark p {
		display: flex;
	}
	.watermark b {
		flex: 1;
		border-radius: 10px;
		background: rgba(130, 130, 130, .5);
		font-size: 28px;
		font-weight: 400;
		line-height: 32px;
		text-align: center;
	}
	.watermark small {
		display: block;
		padding-left: 2px;
		color: #a9adb3;
		font-family: "Liberation Mono", monospace;
		font-size: 13px;
		line-height: 28px;
	}
</style>
